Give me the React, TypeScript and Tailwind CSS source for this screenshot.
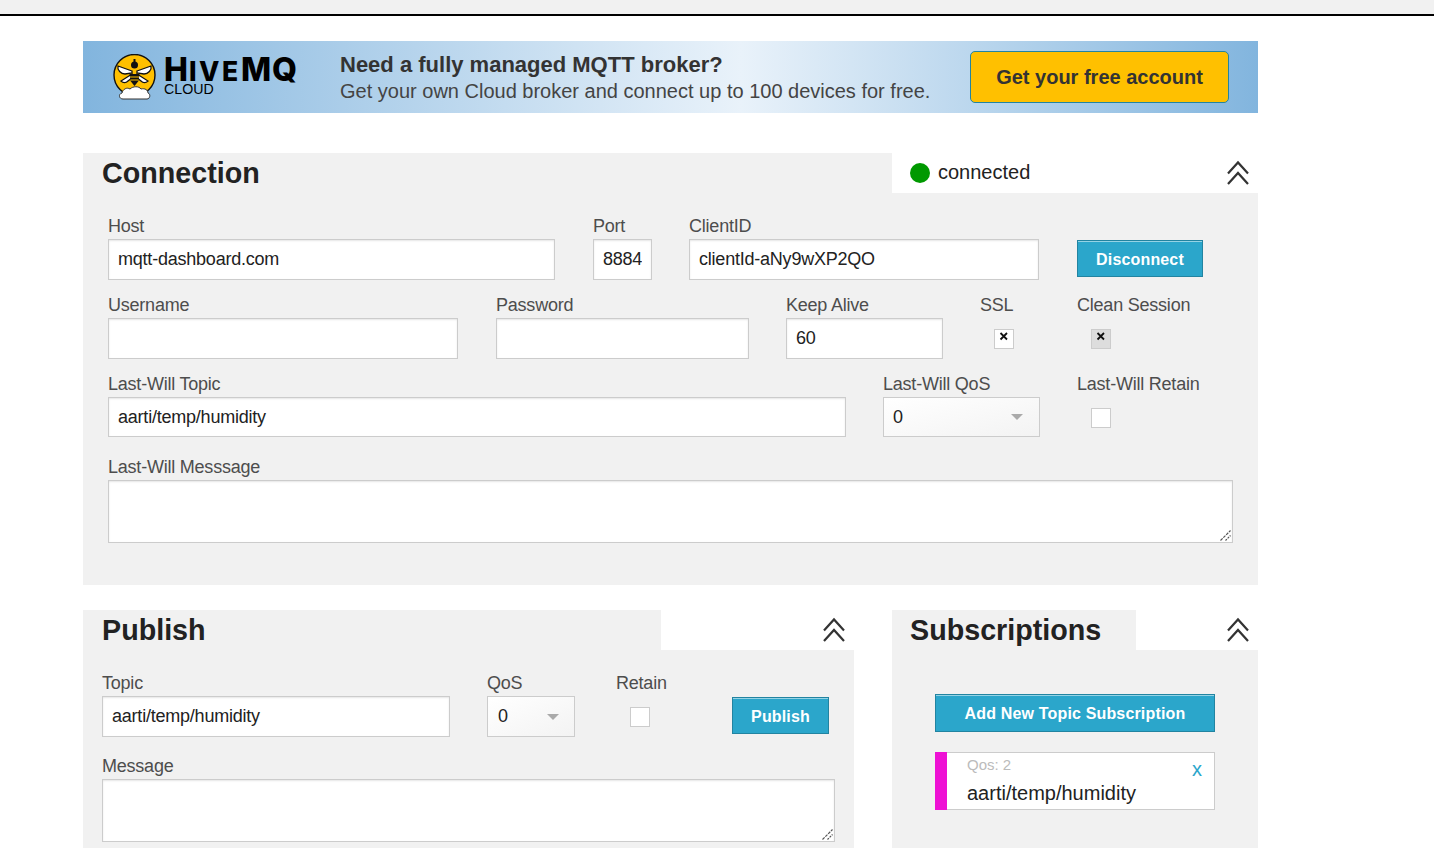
import type { ReactNode } from "react";

const inputClass =
  "block w-full h-full bg-white border border-[#cccccc] px-[9px] text-[18px] text-[#222222] tracking-[-0.22px] outline-none shadow-[inset_0_1px_2px_rgba(0,0,0,0.1)]";

function Chevrons() {
  return (
    <svg width="24" height="26" viewBox="0 0 24 26" fill="none" stroke="#333333" strokeWidth="2.2">
      <path d="M2 13.5 12 2.5 22 13.5" />
      <path d="M2 24 12 13 22 24" />
    </svg>
  );
}

function Field({ label, className, children }: { label: string; className: string; children: ReactNode }) {
  return (
    <div className={className}>
      <div className="h-[26px] leading-[26px] text-[18px] text-[#4d4d4d] tracking-[-0.22px] whitespace-nowrap">{label}</div>
      {children}
    </div>
  );
}

function TextInput({ value, className }: { value?: string; className: string }) {
  return (
    <div className={className}>
      <input className={inputClass} defaultValue={value} />
    </div>
  );
}

function TextArea() {
  return (
    <div className="relative h-[63px]">
      <textarea className="block w-full h-full resize-none bg-white border border-[#cccccc] outline-none shadow-[inset_0_1px_2px_rgba(0,0,0,0.1)]" />
      <svg width="11" height="11" viewBox="0 0 11 11" className="absolute right-[2px] bottom-[2px]" fill="none" stroke="#555555" strokeWidth="1.2">
        <path d="M0.5 10.5 10.5 0.5" strokeDasharray="3 1" />
        <path d="M5.5 10.5 10.5 5.5" strokeDasharray="2 1" />
      </svg>
    </div>
  );
}

function Select({ className }: { className: string }) {
  return (
    <div className={`flex items-center justify-between border border-[#cccccc] bg-gradient-to-br from-white to-[#f3f3f3] text-[18px] text-[#222222] ${className}`}>
      <span>0</span>
      <span className="w-0 h-0 border-x-[6px] border-x-transparent border-t-[6px] border-t-[#aaaaaa]" />
    </div>
  );
}

function Check({ checked, className }: { checked?: boolean; className: string }) {
  return (
    <div className={`w-5 h-5 border border-[#cccccc] flex justify-center ${className}`}>
      {checked && (
        <svg width="10" height="10" viewBox="0 0 10 10" className="mt-[2px]" stroke="#111111" strokeWidth="1.8">
          <path d="M1.5 1 8 7.5M8 1 1.5 7.5" />
        </svg>
      )}
    </div>
  );
}

function Button({ children, className }: { children: ReactNode; className: string }) {
  return (
    <button className={`bg-[#2ba6cb] border border-[#2284a1] text-white font-bold text-[16px] tracking-[0.16px] shadow-[inset_0_1px_0_rgba(255,255,255,0.5)] ${className}`}>
      {children}
    </button>
  );
}

function SectionTitle({ children, className }: { children: ReactNode; className: string }) {
  return (
    <div className={`h-10 pt-[1px] bg-[#f1f1f1] flex items-center text-[28.7px] font-bold text-[#222222] ${className}`}>
      {children}
    </div>
  );
}

function Logo() {
  return (
    <div className="flex items-center w-[226px]">
      <svg width="46" height="46" viewBox="0 0 46 46" className="shrink-0">
        <circle cx="21.5" cy="21" r="20.5" fill="#ffc000" stroke="#111111" strokeWidth="1.4" />
        <path d="M19 17 5 12c-1 4 3 8 7 8l7-1ZM24 17l14-5c1 4-3 8-7 8l-7-1Z" fill="#ffffff" stroke="#111111" strokeWidth="1.3" />
        <path d="M19 20 8 27c2 2 5 2 7 0l5-4ZM24 20l11 7c-2 2-5 2-7 0l-5-4Z" fill="#ffffff" stroke="#111111" strokeWidth="1.3" />
        <circle cx="21.5" cy="11" r="3.5" fill="#111111" />
        <path d="M21.5 5v3" stroke="#111111" strokeWidth="2" />
        <path d="M16.5 20h10l-1 7-4 5-4-5Z" fill="#111111" />
        <path d="M17 23h9M17.5 26h8" stroke="#ffc000" strokeWidth="1.2" />
        <path d="M10 45c-4 0-5-5-1-6 1-4 5-6 8-4 3-3 9-3 11 0 4-1 7 1 7 4 3 1 2 6-1 6Z" fill="#ffffff" stroke="#333333" strokeWidth="1" />
      </svg>
      <div className="ml-[5px] -mt-[3px] text-black font-['Inter',sans-serif]">
        <div className="h-[27px] leading-[29px] font-extrabold whitespace-nowrap text-[32px] tracking-[1px]">
          H<span className="text-[26.5px] tracking-[2.6px]">IVE</span>MQ
        </div>
        <div className="h-[14px] leading-[14px] text-[14.2px] font-['Liberation_Sans',sans-serif] whitespace-nowrap">CLOUD</div>
      </div>
    </div>
  );
}

export default function App() {
  return (
    <div className="h-[848px] overflow-hidden bg-white font-['Liberation_Sans',Arial,sans-serif]">
      <div className="h-4 bg-[#f1f1f1] border-b-2 border-black" />

      <div className="w-[1175px] ml-[83px] mt-[25px]">
        <div className="h-[72px] flex items-center pl-[30px] bg-[linear-gradient(90deg,#82b5de_0%,#e9f2fa_56%,#82b5de_100%)]">
          <Logo />
          <div className="ml-[1px] pt-[2px] text-[#333333] w-[630px]">
            <div className="text-[22px] leading-[26px] font-bold">Need a fully managed MQTT broker?</div>
            <div className="text-[20px] leading-[26px] text-[#444444] whitespace-nowrap">Get your own Cloud broker and connect up to 100 devices for free.</div>
          </div>
          <button className="w-[259px] h-[52px] rounded-[5px] bg-[#ffc000] border border-[#2284a1] text-[20px] font-bold text-[#333333]">
            Get your free account
          </button>
        </div>

        {/* Connection */}
        <section className="mt-10 h-[432px] bg-[#f1f1f1]">
          <div className="flex bg-white h-10">
            <SectionTitle className="w-[809px] pl-[19px]">Connection</SectionTitle>
            <div className="flex-1 flex items-center pl-[18px] pr-[8px]">
              <span className="w-5 h-5 rounded-full bg-[#009900]" />
              <span className="ml-2 -mt-[2px] text-[20px] text-[#222222]">connected</span>
              <span className="ml-auto"><Chevrons /></span>
            </div>
          </div>

          <div className="pl-[25px] pt-[20px]">
            <div className="flex h-[87px]">
              <Field label="Host" className="w-[447px]"><TextInput value="mqtt-dashboard.com" className="h-[41px]" /></Field>
              <Field label="Port" className="w-[59px] ml-[38px]"><TextInput value="8884" className="h-[41px]" /></Field>
              <Field label="ClientID" className="w-[350px] ml-[37px]"><TextInput value="clientId-aNy9wXP2QO" className="h-[41px]" /></Field>
              <Button className="w-[126px] h-[37px] ml-[38px] mt-[27px] pt-[2px]">Disconnect</Button>
            </div>
            <div className="flex h-[79px] -mt-[8px]">
              <Field label="Username" className="w-[350px]"><TextInput className="h-[41px]" /></Field>
              <Field label="Password" className="w-[253px] ml-[38px]"><TextInput className="h-[41px]" /></Field>
              <Field label="Keep Alive" className="w-[157px] ml-[37px]"><TextInput value="60" className="h-[41px]" /></Field>
              <Field label="SSL" className="w-[60px] ml-[37px]"><Check checked className="ml-[14px] mt-[11px] bg-white" /></Field>
              <Field label="Clean Session" className="ml-[37px]"><Check checked className="ml-[14px] mt-[11px] bg-[#dddddd]" /></Field>
            </div>
            <div className="flex h-[83px]">
              <Field label="Last-Will Topic" className="w-[738px]"><TextInput value="aarti/temp/humidity" className="h-10" /></Field>
              <Field label="Last-Will QoS" className="w-[157px] ml-[37px]"><Select className="h-10 pl-[9px] pr-[16px]" /></Field>
              <Field label="Last-Will Retain" className="ml-[37px]"><Check className="ml-[14px] mt-[11px] bg-white" /></Field>
            </div>
            <Field label="Last-Will Messsage" className="w-[1125px]">
              <TextArea />
            </Field>
          </div>
        </section>

        <div className="flex mt-[25px]">
          {/* Publish */}
          <section className="w-[771px] h-[300px] bg-[#f1f1f1]">
            <div className="flex bg-white h-10">
              <SectionTitle className="w-[578px] pl-[19px]">Publish</SectionTitle>
              <div className="flex-1 flex items-center justify-end pr-[8px]"><Chevrons /></div>
            </div>
            <div className="pl-[19px] pt-[20px]">
              <div className="flex h-[83px]">
                <Field label="Topic" className="w-[348px]"><TextInput value="aarti/temp/humidity" className="h-[41px]" /></Field>
                <Field label="QoS" className="w-[88px] ml-[37px]"><Select className="h-[41px] pl-[10px] pr-[15px]" /></Field>
                <Field label="Retain" className="w-[60px] ml-[41px]"><Check className="ml-[14px] mt-[11px] bg-white" /></Field>
                <Button className="w-[97px] h-[37px] ml-[56px] mt-[27px] pt-[2px]">Publish</Button>
              </div>
              <Field label="Message" className="w-[733px]">
                <TextArea />
              </Field>
            </div>
          </section>

          {/* Subscriptions */}
          <section className="w-[366px] ml-[38px] h-[300px] bg-[#f1f1f1]">
            <div className="flex bg-white h-10">
              <SectionTitle className="w-[244px] pl-[18px]">Subscriptions</SectionTitle>
              <div className="flex-1 flex items-center justify-end pr-[8px]"><Chevrons /></div>
            </div>
            <div className="pl-[43px] pt-[44px] w-[323px]">
              <Button className="w-full h-[38px] pt-[1px]">Add New Topic Subscription</Button>
              <div className="mt-5 h-[58px] flex bg-white border border-[#cccccc] border-l-0">
                <div className="w-3 -my-px bg-[#ee11d4]" />
                <div className="flex-1 pl-5">
                  <div className="text-[15px] leading-[24px] text-[#bbbbbb]">Qos: 2</div>
                  <div className="text-[20px] leading-[32px] text-[#222222]">aarti/temp/humidity</div>
                </div>
                <div className="w-[22px] pt-[4px] text-[20px] text-[#2ba6cb] leading-[24px]">x</div>
              </div>
            </div>
          </section>
        </div>
      </div>
    </div>
  );
}
